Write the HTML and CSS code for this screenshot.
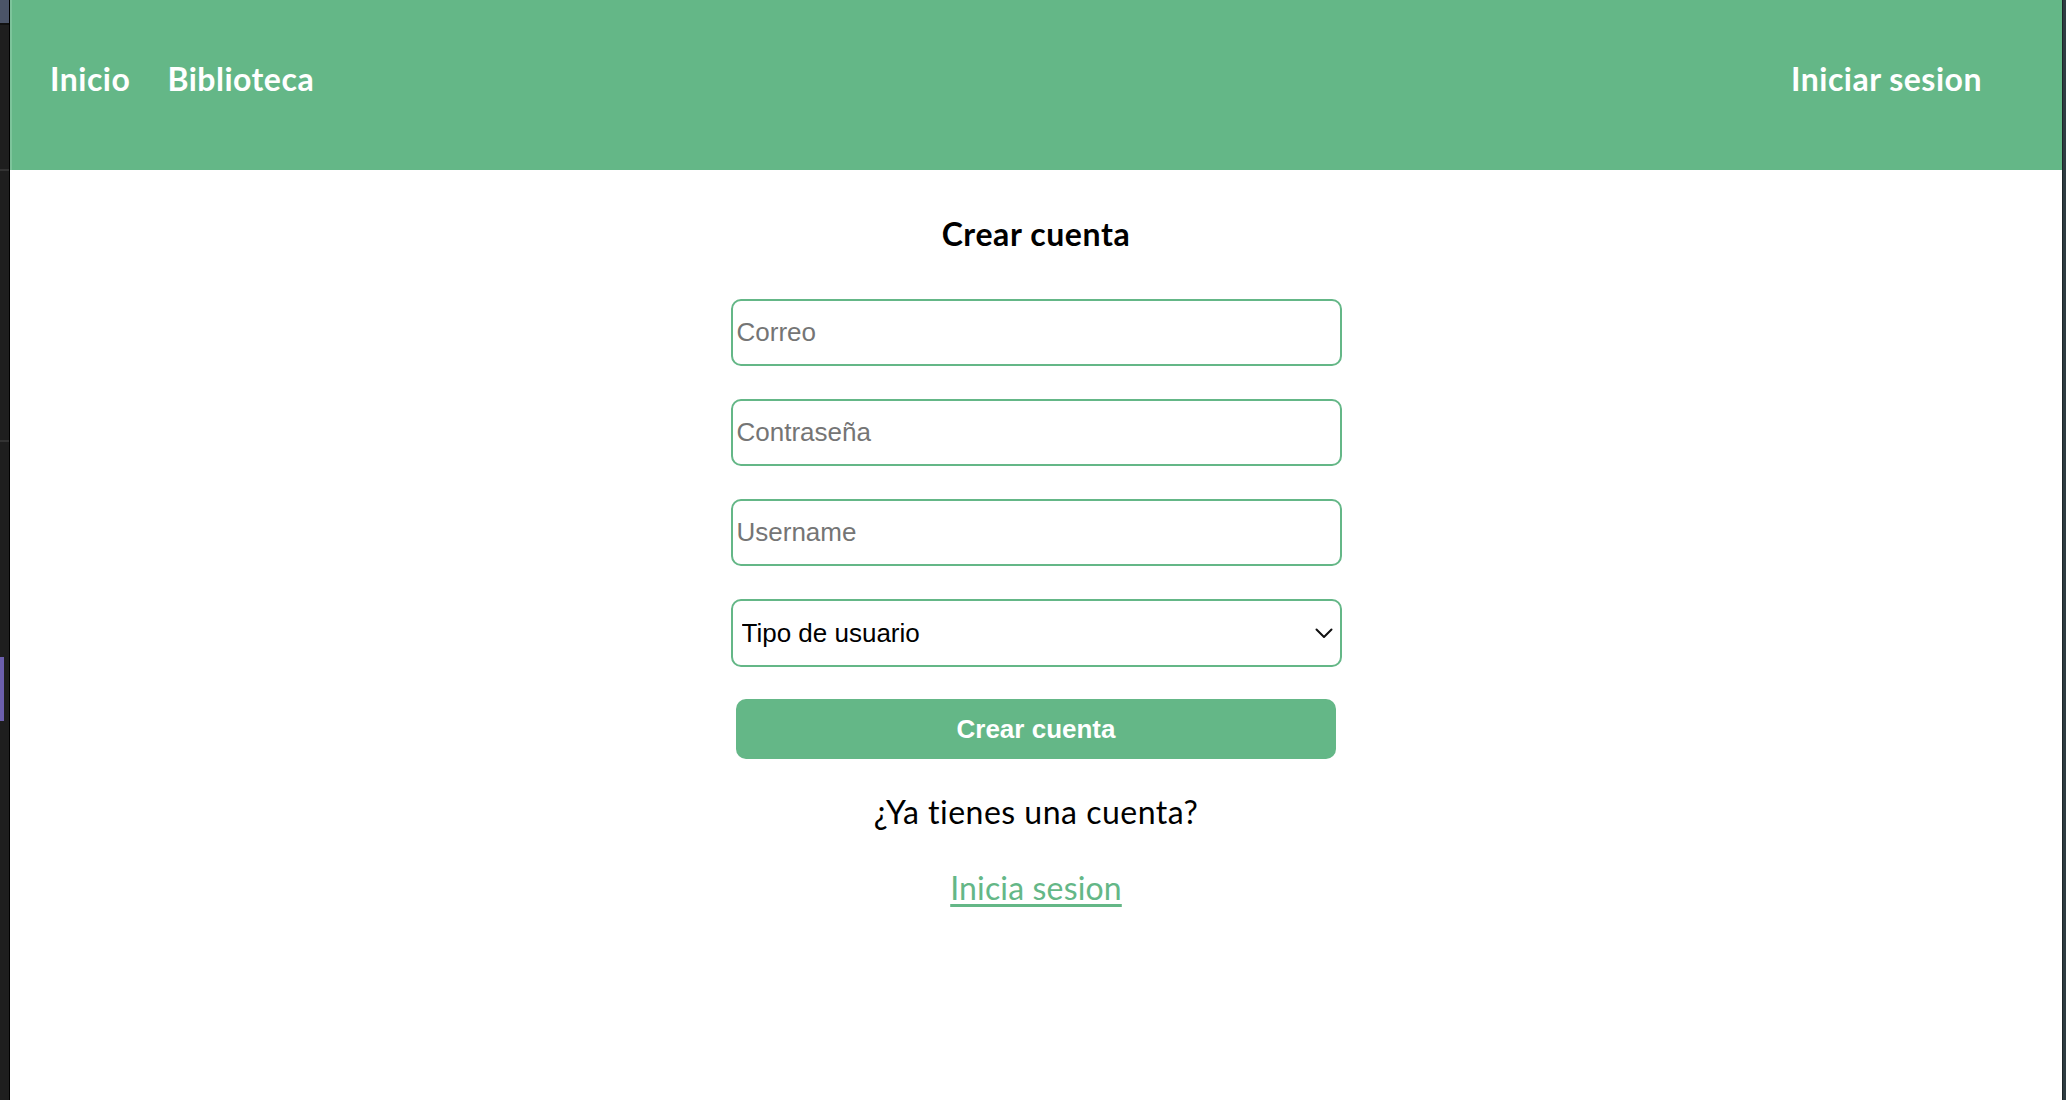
FILE: index.html
```html
<!DOCTYPE html>
<html lang="es">
<head>
<meta charset="utf-8">
<title>Crear cuenta</title>
<link rel="stylesheet" href="styles.css">
</head>
<body>
<div class="rail-left">
  <div class="rail-top"></div>
  <div class="rail-line"></div>
  <div class="rail-line rail-line-2"></div>
  <div class="rail-mark"></div>
</div>
<div class="page">
  <header class="topbar">
    <nav class="nav-left">
      <a class="nav-link" href="#">Inicio</a>
      <a class="nav-link" href="#">Biblioteca</a>
    </nav>
    <a class="nav-link" href="#">Iniciar sesion</a>
  </header>
  <main class="content">
    <h1 class="title">Crear cuenta</h1>
    <form class="form">
      <input class="field" type="email" placeholder="Correo">
      <input class="field" type="password" placeholder="Contraseña">
      <input class="field" type="text" placeholder="Username">
      <div class="select-wrap">
        <select class="field select">
          <option>Tipo de usuario</option>
        </select>
        <svg class="chevron" width="18" height="11" viewBox="0 0 18 11"><path d="M1.5 1.5 L9 9 L16.5 1.5" fill="none" stroke="#111" stroke-width="2" stroke-linecap="round" stroke-linejoin="round"/></svg>
      </div>
      <button class="submit" type="button">Crear cuenta</button>
    </form>
    <p class="question">¿Ya tienes una cuenta?</p>
    <a class="link" href="#">Inicia sesion</a>
  </main>
</div>
<div class="rail-right"></div>
</body>
</html>
```

FILE: styles.css
```css
* { box-sizing: border-box; }

html, body {
  margin: 0;
  height: 1100px;
  overflow: hidden;
}

body {
  display: flex;
  background: #1e1e1e;
}

.rail-left {
  width: 10px;
  flex: none;
  background: #1e1e1e;
  border-right: 1px solid #000;
  display: flex;
  flex-direction: column;
}

.rail-top {
  height: 25px;
  background: #4b5468;
  border-bottom: 2px solid #111;
}

.rail-line {
  margin-top: 144px;
  height: 2px;
  background: #333;
}

.rail-line-2 {
  margin-top: 269px;
}

.rail-mark {
  margin-top: 215px;
  width: 4px;
  height: 64px;
  background: #6c5fae;
}

.rail-right {
  width: 4px;
  flex: none;
  background: #2e3c41;
  border-left: 1px solid #1d2629;
}

.page {
  flex: 1;
  background: #fff;
  display: flex;
  flex-direction: column;
}

.topbar {
  height: 170px;
  background: #64b787;
  border-left: 2px solid #7dc49b;
  display: flex;
  align-items: center;
  justify-content: space-between;
  padding: 0 80px 11px 38px;
}

.nav-left {
  display: flex;
  gap: 37px;
}

.nav-link {
  color: #fff;
  text-decoration: none;
  font-family: Lato, "Open Sans", sans-serif;
  font-weight: 700;
  font-size: 32px;
  letter-spacing: 0.5px;
  line-height: 1.2;
}

.content {
  display: flex;
  flex-direction: column;
  align-items: center;
  padding-top: 44px;
  font-family: Lato, "Open Sans", sans-serif;
}

.title {
  margin: 0 0 45px;
  font-size: 32px;
  line-height: 40px;
  font-weight: 700;
  letter-spacing: 0.6px;
  color: #000;
}

.form {
  width: 611px;
  display: flex;
  flex-direction: column;
  align-items: center;
  gap: 33px;
}

.field {
  width: 100%;
  height: 67px;
  border: 2px solid #64b787;
  border-radius: 10px;
  padding: 0 4px;
  font-family: "Liberation Sans", Arial, sans-serif;
  font-size: 26px;
  color: #000;
  background: #fff;
  outline: none;
}

.field::placeholder {
  color: #757575;
}

.select-wrap {
  position: relative;
  width: 100%;
}

.select {
  height: 68px;
  padding-left: 9px;
  appearance: none;
  -webkit-appearance: none;
}

.chevron {
  position: absolute;
  right: 9px;
  top: 29px;
  pointer-events: none;
}

.submit {
  margin-top: -1px;
  width: 600px;
  height: 60px;
  border: none;
  border-radius: 10px;
  background: #64b787;
  color: #fff;
  font-family: "Liberation Sans", Arial, sans-serif;
  font-weight: 700;
  font-size: 26px;
}

.question {
  margin: 33px 0 0;
  font-size: 32px;
  line-height: 40px;
  letter-spacing: 0.5px;
  color: #000;
}

.link {
  margin-top: 36px;
  font-size: 32px;
  line-height: 40px;
  letter-spacing: 0.15px;
  color: #64b787;
  text-decoration: underline;
  text-underline-offset: 4px;
}
```
